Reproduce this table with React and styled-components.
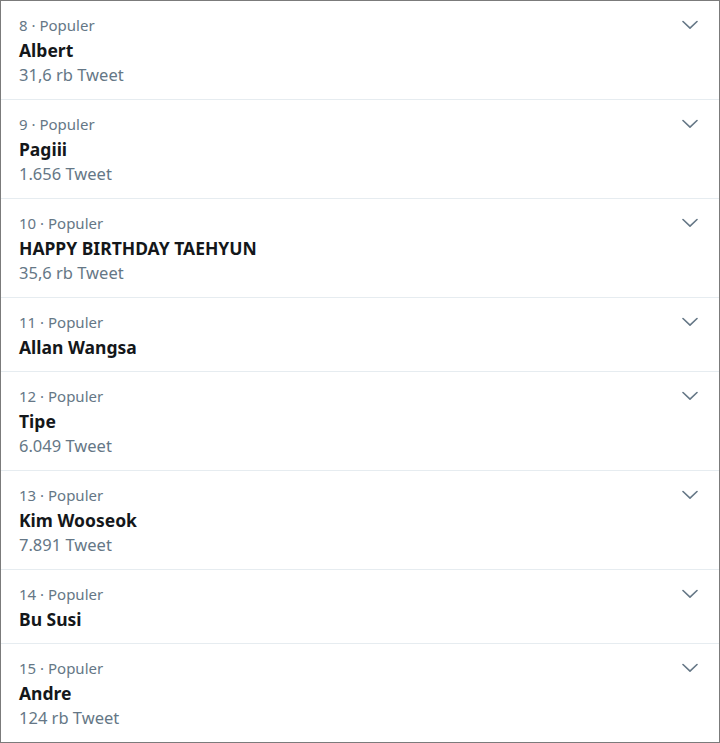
import React from "react";
import styled, { createGlobalStyle } from "styled-components";

const Global = createGlobalStyle`
  html, body { margin: 0; padding: 0; background: #fff; }
  * { box-sizing: border-box; }
`;

const Frame = styled.div`
  width: 720px;
  height: 743px;
  border: 1px solid #7b7b7b;
  background: #fff;
  font-family: "Noto Sans", "Segoe UI", Arial, sans-serif;
  display: flex;
  flex-direction: column;
  overflow: hidden;
`;

const Row = styled.div`
  display: flex;
  align-items: flex-start;
  justify-content: space-between;
  padding: 12px 18px 12px 18px;
  border-bottom: ${(p) => (p.$last ? "none" : "1px solid #e6ecf0")};
`;

const Body = styled.div`
  display: flex;
  flex-direction: column;
`;

const Meta = styled.div`
  font-size: 15px;
  line-height: 25px;
  color: #657786;
`;

const Name = styled.div`
  font-size: 17.5px;
  line-height: 24px;
  font-weight: 700;
  color: #14171a;
`;

const Count = styled.div`
  font-size: 16.5px;
  line-height: 25px;
  color: #657786;
`;

const Caret = styled.button`
  border: none;
  background: none;
  padding: 0;
  margin: 6px 3px 0 0;
  width: 17px;
  height: 12px;
  display: flex;
  align-items: center;
  justify-content: center;
  color: #657786;
`;

const items = [
  { n: 8, name: "Albert", count: "31,6 rb Tweet" },
  { n: 9, name: "Pagiii", count: "1.656 Tweet" },
  { n: 10, name: "HAPPY BIRTHDAY TAEHYUN", count: "35,6 rb Tweet" },
  { n: 11, name: "Allan Wangsa" },
  { n: 12, name: "Tipe", count: "6.049 Tweet" },
  { n: 13, name: "Kim Wooseok", count: "7.891 Tweet" },
  { n: 14, name: "Bu Susi" },
  { n: 15, name: "Andre", count: "124 rb Tweet" },
];

function Chevron() {
  return (
    <svg width="16" height="10" viewBox="0 0 16 10" fill="none">
      <path d="M1 1.5 L8 8.2 L15 1.5" stroke="currentColor" strokeWidth="1.6" strokeLinecap="round" strokeLinejoin="round" />
    </svg>
  );
}

export default function App() {
  return (
    <>
      <Global />
      <Frame>
        {items.map((it, i) => (
          <Row key={it.n} $last={i === items.length - 1}>
            <Body>
              <Meta>{it.n} · Populer</Meta>
              <Name>{it.name}</Name>
              {it.count && <Count>{it.count}</Count>}
            </Body>
            <Caret aria-label="Lainnya">
              <Chevron />
            </Caret>
          </Row>
        ))}
      </Frame>
    </>
  );
}
